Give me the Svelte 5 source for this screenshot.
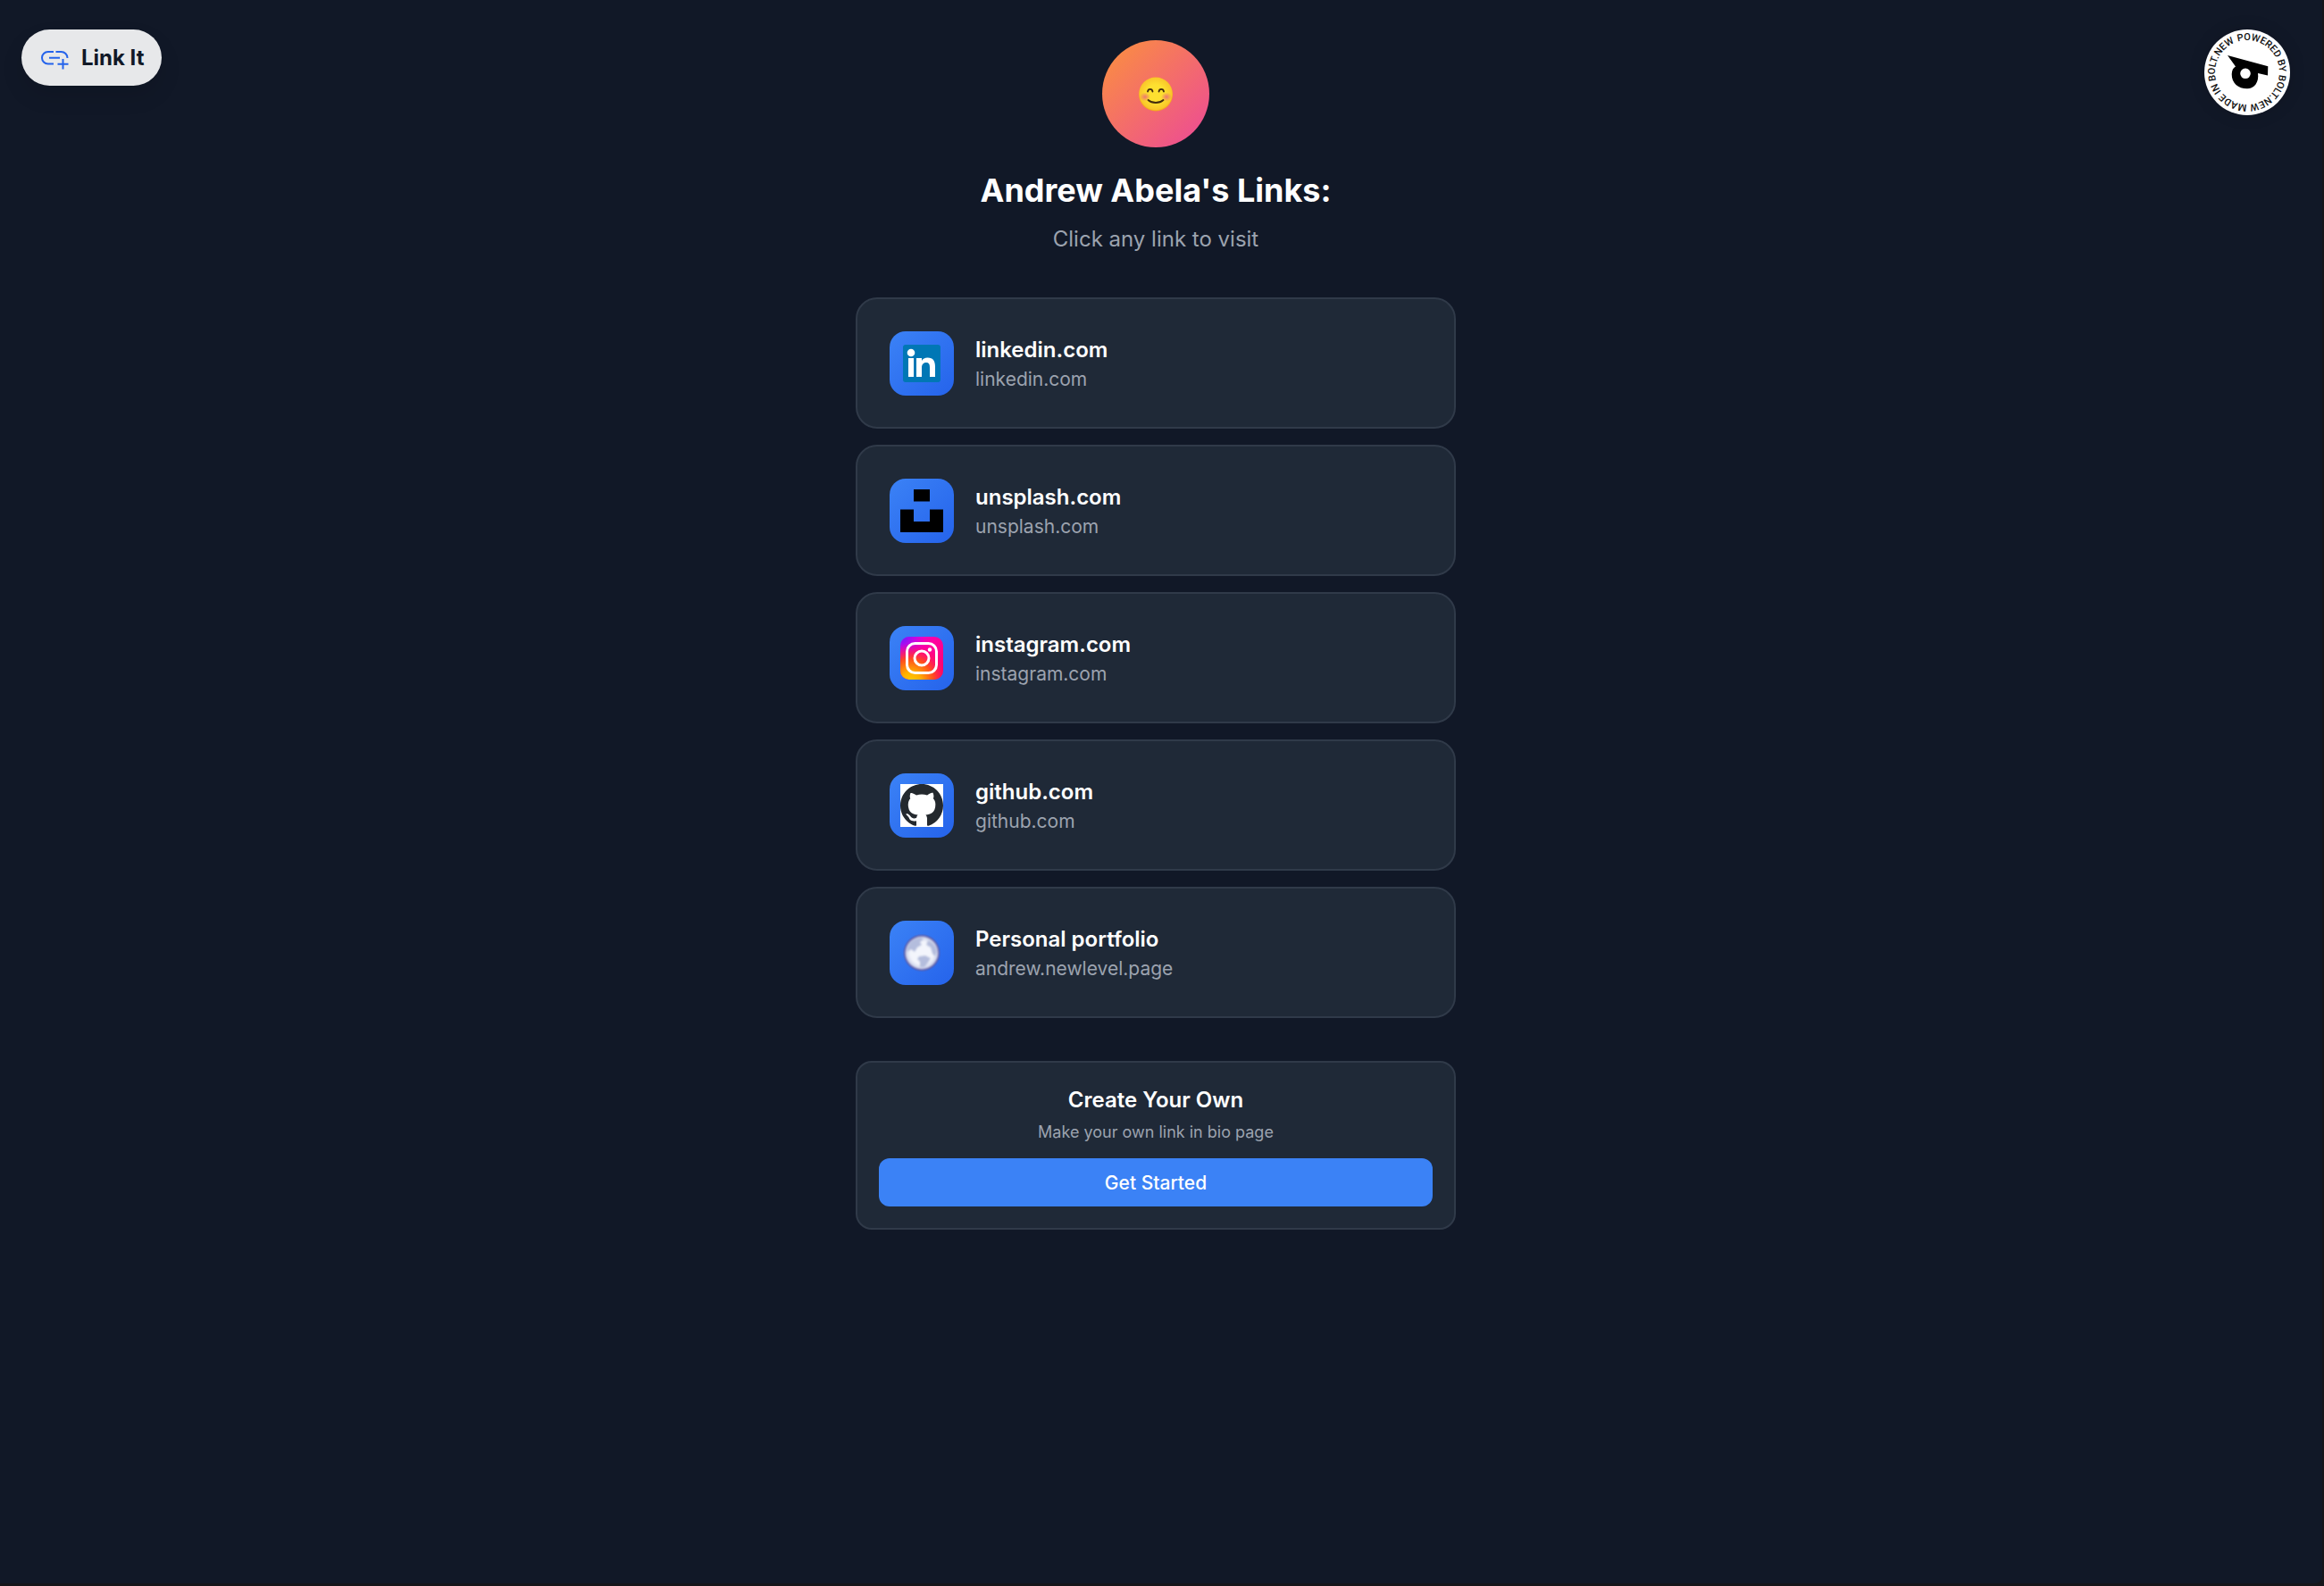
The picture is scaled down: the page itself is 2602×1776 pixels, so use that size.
<script lang="ts">
	interface LinkItem {
		title: string;
		domain: string;
		href: string;
		icon: 'linkedin' | 'unsplash' | 'instagram' | 'github' | 'globe';
	}

	const links: LinkItem[] = [
		{ title: 'linkedin.com', domain: 'linkedin.com', href: 'https://linkedin.com', icon: 'linkedin' },
		{ title: 'unsplash.com', domain: 'unsplash.com', href: 'https://unsplash.com', icon: 'unsplash' },
		{ title: 'instagram.com', domain: 'instagram.com', href: 'https://instagram.com', icon: 'instagram' },
		{ title: 'github.com', domain: 'github.com', href: 'https://github.com', icon: 'github' },
		{
			title: 'Personal portfolio',
			domain: 'andrew.newlevel.page',
			href: 'https://andrew.newlevel.page',
			icon: 'globe'
		}
	];
</script>

<div class="page">
	<a class="brand" href="/">
		<svg class="brand-icon" viewBox="0 0 36 36" aria-hidden="true">
			<path
				fill="none"
				stroke="currentColor"
				stroke-width="2"
				d="M17 11H10.700a6.700 6.700 0 0 0 0 13.400H17M19.500 11H25.500a7 7 0 0 1 7 7M12 17.700H24M27.500 19v11.500M21.500 24.700h12"
			/>
		</svg>
		<span>Link It</span>
	</a>

	<a class="badge" href="https://bolt.new" aria-label="Powered by Bolt.new">
		<svg viewBox="0 0 96 96">
			<defs>
				<path id="ring" d="M48 12a36 36 0 1 1 0 72a36 36 0 1 1 0-72" />
			</defs>
			<circle cx="48" cy="48" r="48" fill="#fff" />
			<g transform="rotate(-17 48 48)">
				<text class="ring-text">
					<textPath href="#ring">POWERED BY BOLT.NEW MADE IN BOLT.NEW</textPath>
				</text>
			</g>
			<path
				fill="#000"
				fill-rule="evenodd"
				d="M26 29L71.300 41.300L71 51.500L60 49C61.500 59 56 66.300 48 66.300C38 66.300 30.500 60 30.700 50C31 46 32 43 35 41.500ZM46 43.500A5.800 5.800 0 1 0 46 55.100A5.800 5.800 0 1 0 46 43.500Z"
			/>
		</svg>
	</a>

	<main class="content">
		<header class="profile">
			<div class="avatar">
				<svg viewBox="0 0 40 40" role="img" aria-label="Smiling face">
					<defs>
						<radialGradient id="face" cx="50%" cy="48%" r="52%">
							<stop offset="0.5" stop-color="#fde030" />
							<stop offset="0.9" stop-color="#f9c72a" />
							<stop offset="1" stop-color="#f2a016" />
						</radialGradient>
						<radialGradient id="cheek">
							<stop offset="0" stop-color="#ed7770" />
							<stop offset="1" stop-color="#ed7770" stop-opacity="0" />
						</radialGradient>
					</defs>
					<circle cx="20" cy="20.500" r="19" fill="url(#face)" />
					<ellipse cx="8" cy="23.500" rx="6" ry="5" fill="url(#cheek)" />
					<ellipse cx="32" cy="23.500" rx="6" ry="5" fill="url(#cheek)" />
					<g fill="none" stroke="#422b0d" stroke-width="1.800" stroke-linecap="round">
						<path d="M11 17.500C11.500 14 16 14 16.500 17.500" />
						<path d="M23.500 17.500C24 14 28.500 14 29 17.500" />
						<path d="M11.500 27C16 31 24 31 28.500 27" />
					</g>
				</svg>
			</div>
			<h1>Andrew Abela's Links:</h1>
			<p>Click any link to visit</p>
		</header>

		<nav class="links" aria-label="Links">
			{#each links as link (link.href)}
				<a class="card" href={link.href}>
					<span class="tile">
						{#if link.icon === 'linkedin'}
							<svg viewBox="0 0 48 48" aria-hidden="true">
								<rect x="3" y="3" width="42" height="42" rx="3" fill="#0077b5" />
								<g fill="#fff">
									<circle cx="12" cy="12" r="4.300" />
									<rect x="9" y="18" width="6" height="21" />
									<path d="M18 18h6v3c1.200-2.200 3.500-3.500 6.500-3.500 6.500 0 8.500 4 8.500 10V39h-6V28.500c0-3-.5-5.500-4-5.500s-5 2.500-5 5.500V39h-6z" />
								</g>
							</svg>
						{:else if link.icon === 'unsplash'}
							<svg viewBox="0 0 48 48" aria-hidden="true">
								<path d="M15 0h18v13.500H15zM0 22.500h15V36h18V22.500h15V48H0z" />
							</svg>
						{:else if link.icon === 'instagram'}
							<svg viewBox="0 0 48 48" aria-hidden="true">
								<defs>
									<linearGradient id="ig-base" x1="0" y1="0" x2="1" y2="1">
										<stop offset="0" stop-color="#d800e8" />
										<stop offset="0.450" stop-color="#ff00a0" />
										<stop offset="1" stop-color="#ff0060" />
									</linearGradient>
									<radialGradient id="ig-violet" cx="0.050" cy="0" r="0.550">
										<stop offset="0" stop-color="#6a1bff" />
										<stop offset="1" stop-color="#c800ff" stop-opacity="0" />
									</radialGradient>
									<radialGradient id="ig-warm" cx="0.250" cy="1.050" r="0.900">
										<stop offset="0" stop-color="#ffcc00" />
										<stop offset="0.250" stop-color="#ffb000" />
										<stop offset="0.600" stop-color="#ff4a20" />
										<stop offset="1" stop-color="#ff0070" stop-opacity="0" />
									</radialGradient>
								</defs>
								<rect width="48" height="48" rx="10" fill="url(#ig-base)" />
								<rect width="48" height="48" rx="10" fill="url(#ig-violet)" />
								<rect width="48" height="48" rx="10" fill="url(#ig-warm)" />
								<g fill="none" stroke="#fff" stroke-width="3">
									<rect x="7.500" y="7.500" width="33" height="33" rx="9" />
									<circle cx="24" cy="24" r="8" />
								</g>
								<circle cx="33" cy="14.500" r="2.200" fill="#fff" />
							</svg>
						{:else if link.icon === 'github'}
							<svg viewBox="0 0 16 16" aria-hidden="true">
								<rect width="16" height="16" fill="#fff" />
								<path
									fill="#24292e"
									d="M8 0C3.580 0 0 3.580 0 8c0 3.540 2.290 6.530 5.470 7.590.4.070.55-.17.55-.38 0-.19-.01-.82-.01-1.490-2.010.37-2.530-.49-2.690-.94-.09-.23-.48-.94-.82-1.130-.28-.15-.68-.52-.01-.53.63-.01 1.080.58 1.230.82.72 1.210 1.870.87 2.330.66.07-.52.28-.87.51-1.070-1.780-.2-3.640-.89-3.640-3.950 0-.87.31-1.590.82-2.150-.08-.2-.36-1.020.08-2.120 0 0 .67-.21 2.200.82.64-.18 1.320-.27 2-.27s1.360.09 2 .27c1.530-1.040 2.200-.82 2.200-.82.44 1.100.16 1.920.08 2.120.51.56.82 1.270.82 2.150 0 3.070-1.870 3.750-3.650 3.950.29.25.54.73.54 1.480 0 1.070-.01 1.930-.01 2.200 0 .21.15.46.55.38A8.010 8.010 0 0 0 16 8c0-4.420-3.580-8-8-8"
								/>
							</svg>
						{:else}
							<svg viewBox="0 0 48 48" aria-hidden="true">
								<defs>
									<radialGradient id="halo">
										<stop offset="0.840" stop-color="#554f9c" />
										<stop offset="1" stop-color="#554f9c" stop-opacity="0" />
									</radialGradient>
									<radialGradient id="sea">
										<stop offset="0.700" stop-color="#f3f5fc" />
										<stop offset="1" stop-color="#c4cbe6" />
									</radialGradient>
									<filter id="soft">
										<feGaussianBlur stdDeviation="0.800" />
									</filter>
								</defs>
								<circle cx="24" cy="24" r="21.500" fill="url(#halo)" />
								<g filter="url(#soft)">
									<circle cx="24" cy="24" r="18.500" fill="url(#sea)" />
									<g fill="#b4bddd">
										<path d="M9 16C11 11 17 7 23 7L26 9L22 12L24 15L19 18L16 23L12 20L8 23C7 21 8 18 9 16Z" />
										<path d="M31 10C36 12 40 17 41 22L39 28L36 25L34 18L29 15Z" />
										<path d="M21 28L28 27L34 30L31 35L27 40L22 40L22 34L19 31Z" />
									</g>
								</g>
							</svg>
						{/if}
					</span>
					<span class="card-text">
						<span class="card-title">{link.title}</span>
						<span class="card-domain">{link.domain}</span>
					</span>
				</a>
			{/each}
		</nav>

		<section class="cta">
			<h2>Create Your Own</h2>
			<p>Make your own link in bio page</p>
			<button type="button">Get Started</button>
		</section>
	</main>
</div>

<style>
	:global(body) {
		margin: 0;
		background: #15151a;
	}

	.page {
		box-sizing: border-box;
		position: relative;
		min-height: calc(100vh - 3px);
		margin-right: 2px;
		padding: 45px 12px 45px 0;
		border-radius: 0 0 8px 0;
		background: #111827;
		font-family: Inter, sans-serif;
		color: #fff;
	}

	a {
		color: inherit;
		text-decoration: none;
	}

	/* Floating corners */
	.brand {
		position: absolute;
		top: 33px;
		left: 24px;
		display: flex;
		align-items: center;
		gap: 12px;
		box-sizing: border-box;
		height: 63px;
		padding: 0 19px;
		border-radius: 32px;
		background: #e7e8ea;
		box-shadow: 0 12px 24px rgba(0, 0, 0, 0.1);
		color: #111827;
		font-size: 24px;
		font-weight: 700;
	}

	.brand-icon {
		width: 36px;
		height: 36px;
		color: #2563eb;
	}

	.badge {
		position: absolute;
		top: 33px;
		right: 36px;
		width: 96px;
		height: 96px;
		border-radius: 50%;
		box-shadow: 0 0 18px rgba(0, 0, 0, 0.15);
	}

	.badge svg {
		display: block;
	}

	.ring-text {
		font-family: Roboto, sans-serif;
		font-size: 11px;
		font-weight: 500;
		fill: #111;
	}

	.content {
		width: 100%;
		max-width: 672px;
		margin: 0 auto;
	}

	/* Profile */
	.profile {
		display: flex;
		flex-direction: column;
		align-items: center;
		margin-bottom: 47px;
		text-align: center;
	}

	.avatar {
		display: flex;
		align-items: center;
		justify-content: center;
		width: 120px;
		height: 120px;
		margin-bottom: 24px;
		border-radius: 50%;
		background: linear-gradient(135deg, #fb923c, #ec4899);
	}

	.avatar svg {
		width: 40px;
		height: 40px;
	}

	h1 {
		margin: 0 0 13px;
		font-size: 36px;
		font-weight: 700;
		line-height: 48px;
	}

	.profile p {
		margin: 0;
		color: #9ca3af;
		font-size: 24px;
		line-height: 36px;
	}

	/* Link cards */
	.links {
		display: flex;
		flex-direction: column;
		gap: 18px;
		margin-bottom: 48px;
	}

	.card {
		display: flex;
		align-items: center;
		gap: 24px;
		box-sizing: border-box;
		min-height: 147px;
		padding: 35px 36px;
		border: 2px solid #303a49;
		border-radius: 24px;
		background: #1f2937;
	}

	.tile {
		display: flex;
		align-items: center;
		justify-content: center;
		flex-shrink: 0;
		width: 72px;
		height: 72px;
		border-radius: 18px;
		background: linear-gradient(135deg, #3b82f6, #2563eb);
	}

	.tile svg {
		width: 48px;
		height: 48px;
	}

	.card-text {
		display: flex;
		flex-direction: column;
		min-width: 0;
	}

	.card-title {
		font-size: 24px;
		font-weight: 600;
		line-height: 36px;
	}

	.card-domain {
		color: #9ca3af;
		font-size: 21px;
		line-height: 30px;
	}

	/* Call to action */
	.cta {
		padding: 24px;
		border: 2px solid #303a49;
		border-radius: 18px;
		background: #1f2937;
		text-align: center;
	}

	h2 {
		margin: 0 0 6px;
		font-size: 24px;
		font-weight: 600;
		line-height: 36px;
	}

	.cta p {
		margin: 0 0 17px;
		color: #9ca3af;
		font-size: 18px;
		line-height: 24px;
	}

	button {
		width: 100%;
		height: 54px;
		border: 0;
		border-radius: 12px;
		background: #3b82f6;
		color: #fff;
		font-family: inherit;
		font-size: 21px;
		font-weight: 500;
		cursor: pointer;
	}
</style>
